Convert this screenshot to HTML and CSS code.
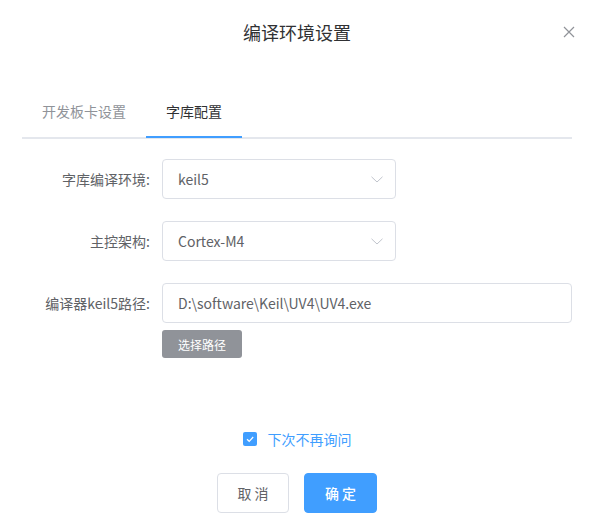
FILE: index.html
```html
<!DOCTYPE html>
<html lang="zh-CN">
<head>
<meta charset="utf-8">
<title>编译环境设置</title>
<link rel="stylesheet" href="styles.css">
</head>
<body>
<div class="dialog">
  <div class="header">
    <span class="title">编译环境设置</span>
    <button class="close" aria-label="关闭">
      <svg width="12" height="12" viewBox="0 0 12 12"><path d="M1 1L11 11M11 1L1 11" stroke="#909399" stroke-width="1.2" fill="none"/></svg>
    </button>
  </div>
  <div class="body">
    <div class="tabs">
      <div class="tab">开发板卡设置</div>
      <div class="tab active">字库配置</div>
    </div>
    <div class="form">
      <div class="row">
        <label class="label">字库编译环境:</label>
        <div class="select">
          <span>keil5</span>
          <svg class="chev" width="12" height="7" viewBox="0 0 12 7"><path d="M0.5 0.8L6 6L11.5 0.8" stroke="#c0c4cc" stroke-width="1" fill="none"/></svg>
        </div>
      </div>
      <div class="row">
        <label class="label">主控架构:</label>
        <div class="select">
          <span>Cortex-M4</span>
          <svg class="chev" width="12" height="7" viewBox="0 0 12 7"><path d="M0.5 0.8L6 6L11.5 0.8" stroke="#c0c4cc" stroke-width="1" fill="none"/></svg>
        </div>
      </div>
      <div class="row last">
        <label class="label">编译器keil5路径:</label>
        <div class="field">
          <div class="input">D:\software\Keil\UV4\UV4.exe</div>
          <button class="pick">选择路径</button>
        </div>
      </div>
    </div>
    <div class="check-row">
      <span class="checkbox">
        <svg width="14" height="14" viewBox="0 0 14 14"><path d="M4 7.2L6.2 9.3L10.2 5" stroke="#fff" stroke-width="1.2" fill="none"/></svg>
      </span>
      <span class="check-text">下次不再询问</span>
    </div>
    <div class="footer">
      <button class="btn">取 消</button>
      <button class="btn primary">确 定</button>
    </div>
  </div>
</div>
</body>
</html>
```

FILE: styles.css
```css
* { box-sizing: border-box; }
html, body {
  margin: 0;
  background: #fff;
}
body {
  font-family: "Noto Sans CJK SC", "Noto Sans", sans-serif;
  width: 594px;
  height: 530px;
  overflow: hidden;
}
.dialog {
  width: 594px;
  position: relative;
}
.header {
  padding: 20px 20px 10px;
  text-align: center;
}
.title {
  font-size: 18px;
  line-height: 24px;
  color: #303133;
  display: inline-block;
}
.close {
  position: absolute;
  top: 25px;
  right: 19px;
  width: 13px;
  height: 13px;
  padding: 0;
  border: 0;
  background: transparent;
  display: flex;
  align-items: center;
  justify-content: center;
}
.body {
  padding: 44px 22px 0;
}
.tabs {
  display: flex;
  height: 40px;
  position: relative;
}
.tabs::after {
  content: "";
  position: absolute;
  left: 0;
  right: 0;
  bottom: 0;
  height: 2px;
  background: #e4e7ed;
}
.tab {
  padding: 0 20px 16px;
  font-size: 14px;
  line-height: 24px;
  color: #909399;
  position: relative;
}
.tab.active {
  color: #303133;
}
.tab.active::after {
  content: "";
  position: absolute;
  left: 0;
  right: 0;
  bottom: 1px;
  height: 2px;
  background: #409eff;
  z-index: 1;
}
.form {
  padding-top: 20px;
}
.row {
  display: flex;
  align-items: flex-start;
  margin-bottom: 22px;
}
.row.last {
  margin-bottom: 0;
}
.label {
  width: 140px;
  flex: none;
  text-align: right;
  padding-right: 12px;
  font-size: 14px;
  line-height: 40px;
  color: #606266;
}
.select {
  width: 234px;
  height: 40px;
  border: 1px solid #dcdfe6;
  border-radius: 4px;
  padding: 0 15px;
  display: flex;
  align-items: center;
  justify-content: space-between;
  font-size: 14px;
  color: #606266;
}
.chev {
  margin-right: -3px;
}
.field {
  flex: 1;
  display: flex;
  flex-direction: column;
  align-items: flex-start;
}
.input {
  width: 100%;
  height: 40px;
  border: 1px solid #dcdfe6;
  border-radius: 4px;
  padding: 0 15px;
  font-size: 14px;
  line-height: 38px;
  color: #606266;
}
.pick {
  margin-top: 7px;
  width: 80px;
  height: 28px;
  border: 0;
  border-radius: 3px;
  background: #909399;
  color: #fff;
  font-family: inherit;
  font-size: 12px;
  padding: 0;
}
.check-row {
  margin-top: 71px;
  display: flex;
  justify-content: center;
  align-items: center;
  gap: 11px;
  height: 20px;
}
.checkbox {
  width: 14px;
  height: 14px;
  border-radius: 2px;
  background: #409eff;
  display: flex;
}
.check-text {
  font-size: 14px;
  line-height: 20px;
  color: #409eff;
}
.footer {
  margin-top: 24px;
  display: flex;
  justify-content: center;
  gap: 15px;
}
.btn {
  width: 72px;
  height: 40px;
  border: 1px solid #dcdfe6;
  border-radius: 4px;
  background: #fff;
  color: #606266;
  font-family: inherit;
  font-size: 14px;
  padding: 0;
}
.btn.primary {
  width: 73px;
  background: #409eff;
  border-color: #409eff;
  color: #fff;
  font-weight: 500;
}
```
